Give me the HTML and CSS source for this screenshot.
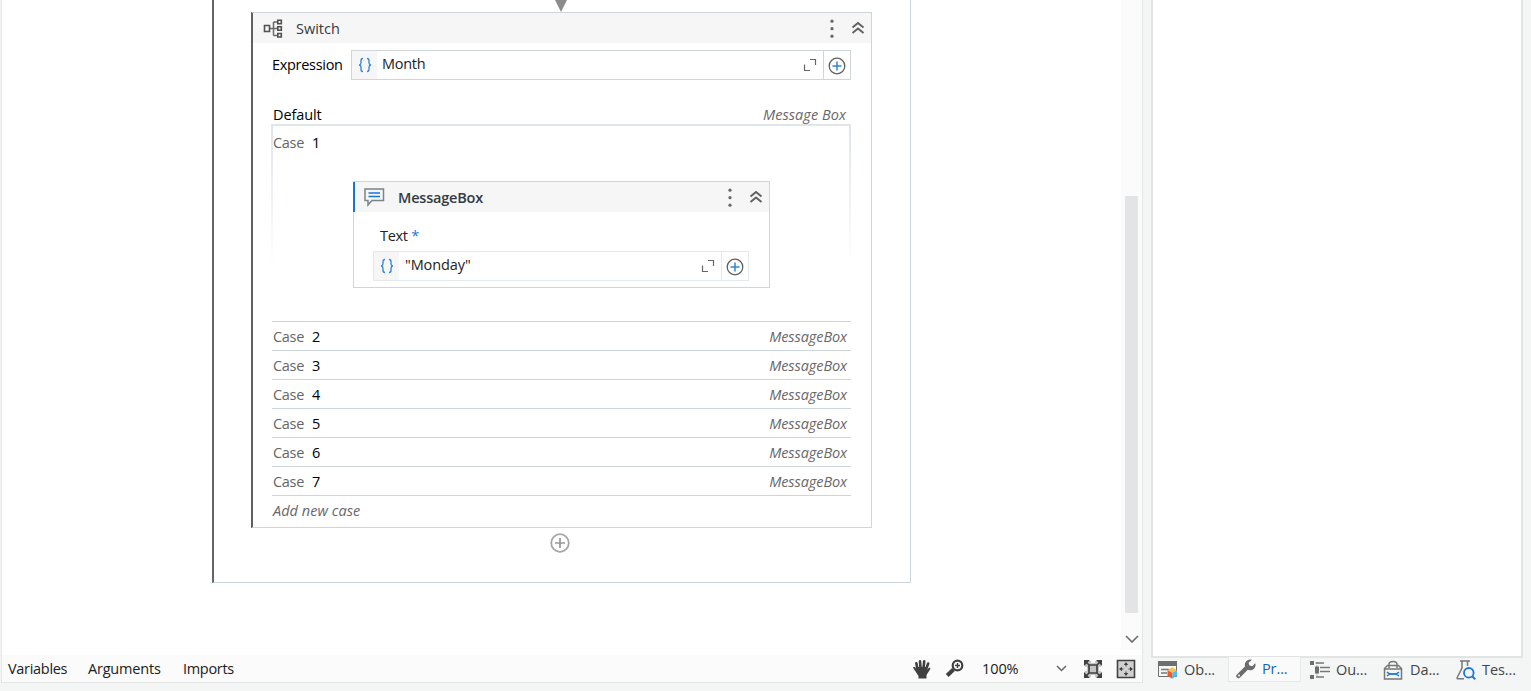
FILE: index.html
```html
<!DOCTYPE html>
<html lang="en">
<head>
<meta charset="utf-8">
<title>Workflow designer</title>
<link rel="stylesheet" href="styles.css">
</head>
<body>
<svg class="defs" width="0" height="0">
  <symbol id="dots" viewBox="0 0 4 20"><g fill="#666"><circle cx="2" cy="2.2" r="1.6"/><circle cx="2" cy="9.7" r="1.6"/><circle cx="2" cy="17.2" r="1.6"/></g></symbol>
  <symbol id="collapse" viewBox="0 0 14 14"><path d="M1.500 6.500 7 2l5.500 4.500M1.500 12 7 7.500l5.500 4.500" fill="none" stroke="#606060" stroke-width="1.900"/></symbol>
  <symbol id="expand" viewBox="0 0 14 14"><path d="M7 1.500h5.500V7M1.500 6.500V12.500H7" fill="none" stroke="#666" stroke-width="1.200"/></symbol>
  <symbol id="plus" viewBox="0 0 18 18"><circle cx="9" cy="9" r="7.800" fill="none" stroke="#606060" stroke-width="1.300"/><path d="M9 4.500v9M4.500 9h9" stroke="#2f86da" stroke-width="1.500"/></symbol>
  <symbol id="chevron" viewBox="0 0 14 8"><path d="M1 1l6 6 6-6" fill="none" stroke="#666" stroke-width="1.500"/></symbol>
  <symbol id="braces" viewBox="0 0 14 16"><path d="M5 1.500C3.300 1.500 3 2.200 3 3.500v2.300C3 7.200 2.500 7.700 1.200 8c1.300.3 1.800.8 1.800 2.200v2.300c0 1.300.3 2 2 2M9 1.500c1.700 0 2 .7 2 2v2.300c0 1.400.5 1.900 1.800 2.200-1.300.3-1.800.8-1.800 2.200v2.300c0 1.300-.3 2-2 2" fill="none" stroke="#2f82d5" stroke-width="1.300"/></symbol>
</svg>
<div class="app">
  <main class="designer">
    <div class="workspace">
      <div class="canvas">
        <section class="sequence">
          <svg class="arrow" width="12" height="12"><path d="M0 0h12L6 12z" fill="#8c8c8c"/></svg>
          <section class="switch">
            <header class="head">
              <svg class="switch-icon" width="20" height="20" viewBox="0 0 20 20" fill="none"><path d="M6.500 9.500H14M10.500 3v13.500M10.500 3H14M10.500 16.500H14" stroke="#6a6a6a" stroke-width="1.500"/><path d="M1.500 6.500h5v6h-5zM14.800 1.200h3.500v3.500h-3.500zM14.800 7.800h3.500v3.500h-3.500zM14.800 14.500h3.500V18h-3.500z" stroke="#505050" stroke-width="1.600"/></svg>
              <span class="title">Switch</span>
              <svg class="dots" width="4" height="20"><use href="#dots"/></svg>
              <svg class="collapse" width="14" height="14"><use href="#collapse"/></svg>
            </header>
            <div class="expression">
              <label class="expr-label">Expression</label>
              <div class="field">
                <span class="braces"><svg width="14" height="16"><use href="#braces"/></svg></span><span class="value">Month</span>
                <svg class="expand" width="14" height="14"><use href="#expand"/></svg>
                <span class="add"><svg width="18" height="18"><use href="#plus"/></svg></span>
              </div>
            </div>
            <div class="default"><span class="default-label">Default</span><em class="default-type">Message Box</em></div>
            <div class="case-open">
              <div class="case-label"><span>Case</span><b>1</b></div>
              <section class="message">
                <header class="head message-head">
                  <svg class="message-icon" width="21" height="19" viewBox="0 0 21 19" fill="none"><path d="M1 1h18.500v11.500H8L4 17v-4.500H1z" stroke="#7b848b" stroke-width="1.500"/><path d="M4.500 5h11.500M4.500 8.500h11.500" stroke="#1b76da" stroke-width="1.300"/></svg>
                  <span class="title">MessageBox</span>
                  <svg class="dots" width="4" height="20"><use href="#dots"/></svg>
                  <svg class="collapse" width="14" height="14"><use href="#collapse"/></svg>
                </header>
                <div class="text-label">Text <span class="star">*</span></div>
                <div class="field light">
                  <span class="braces"><svg width="14" height="16"><use href="#braces"/></svg></span><span class="value">"Monday"</span>
                  <svg class="expand" width="14" height="14"><use href="#expand"/></svg>
                  <span class="add"><svg width="18" height="18"><use href="#plus"/></svg></span>
                </div>
              </section>
            </div>
            <div class="cases">
              <div class="case"><span>Case</span><b>2</b><em>MessageBox</em></div>
              <div class="case"><span>Case</span><b>3</b><em>MessageBox</em></div>
              <div class="case"><span>Case</span><b>4</b><em>MessageBox</em></div>
              <div class="case"><span>Case</span><b>5</b><em>MessageBox</em></div>
              <div class="case"><span>Case</span><b>6</b><em>MessageBox</em></div>
              <div class="case"><span>Case</span><b>7</b><em>MessageBox</em></div>
              <div class="case"><em class="new-case">Add new case</em></div>
            </div>
          </section>
          <svg class="append" width="20" height="20" fill="none"><circle cx="10" cy="10" r="8.800" stroke="#a6a6a6" stroke-width="1.800"/><path d="M10 5v10M5 10h10" stroke="#999" stroke-width="1.700"/></svg>
        </section>
      </div>
      <div class="scrollbar"><div class="thumb"></div><svg class="scroll-down" width="14" height="8"><use href="#chevron"/></svg></div>
    </div>
    <footer class="status">
      <span class="variables">Variables</span><span class="arguments">Arguments</span><span class="imports">Imports</span>
      <svg class="hand" width="20" height="20" viewBox="0 0 20 20" fill="none"><path d="M5.500 10 4.300 4.200M8.500 9 8 2.300M11.500 9l.7-6.700M14 10.500l2.200-6" stroke="#404040" stroke-width="2.600" stroke-linecap="round"/><path d="M1 8.500c1-.8 2.300-.3 3 1l1 1L4.500 8h10l-.2 3.500 2.200-2.300c1-.8 2.200-.1 1.800.8L14.500 16v3.500h-8V17L3.200 12z" fill="#404040"/></svg>
      <svg class="lens" width="20" height="20" viewBox="0 0 20 20" fill="none"><circle cx="12.500" cy="6.500" r="4.800" stroke="#404040" stroke-width="2.200"/><path d="m8.500 10.500-6.300 6" stroke="#404040" stroke-width="4"/><path d="M12.500 4v5M10 6.500h5" stroke="#404040" stroke-width="1.400"/></svg>
      <span class="zoom">100%</span>
      <svg class="zoom-arrow" width="11" height="7" viewBox="0 0 11 7"><path d="m1 1 4.500 4.500L10 1" fill="none" stroke="#666" stroke-width="1.500"/></svg>
      <svg class="fit" width="20" height="20" viewBox="0 0 20 20"><path fill="#c4c4c4" d="M2 2h16v16H2z"/><path d="M6 6h8v8H6zM6 6 2 2M14 6l4-4M6 14l-4 4M14 14l4 4" fill="none" stroke="#404040" stroke-width="1.700"/><path d="M1 1h6L1 7zM19 1h-6l6 6zM1 19h6l-6-6zM19 19h-6l6-6z" fill="#404040"/><path d="M8 0h4v4H8zM8 16h4v4H8zM0 8h4v4H0zM16 8h4v4h-4z" fill="#fbfbfb"/></svg>
      <svg class="overview" width="20" height="20" viewBox="0 0 20 20"><path d="M1.500 1.500h17v17h-17z" fill="#d0d0d0" stroke="#404040" stroke-width="1.600"/><path d="M10 3l2.200 3H7.800zM10 17l2.200-3H7.800zM3 10l3-2.200v4.400zM17 10l-3-2.200v4.400z" fill="#404040"/><path d="M10 5v2.500M10 12.500V15M5 10h2.500M12.500 10H15" stroke="#404040"/></svg>
    </footer>
  </main>
  <aside class="side">
    <div class="properties"></div>
    <nav class="tabs">
      <div class="tab objects"><svg width="21" height="20" viewBox="0 0 21 20" fill="none"><path d="M1.500 2h18v14.500h-18z" stroke="#6d6e70"/><path fill="#6d6e70" d="M1 1h19v5H1z"/><path d="M4 9.500h8M4 13h6" stroke="#777" stroke-width="1.500"/><path d="m10.500 10.200 4.700-3 4.800 3-4.800 2.500z" fill="#f6bd55"/><path d="m10.500 10.200 4.700 2.500v6l-4.700-3z" fill="#fb5525"/><path d="m15.200 12.700 4.800-2.500v5.500l-4.800 3z" fill="#53bde7"/></svg><span>Ob...</span></div>
      <div class="tab active"><svg width="21" height="20" viewBox="0 0 21 20" fill="none"><path d="M3.500 17 12 8.500" stroke="#6b6b6b" stroke-width="4.500" stroke-linecap="round"/><path d="M17 .8a5.300 5.300 0 0 0-6.500 7.500l3 2.700a5.300 5.300 0 0 0 6.700-6.800l-3 3-2.800-.8-.8-2.600z" fill="#6b6b6b"/><circle cx="4" cy="16.500" r="1" fill="#fafafa"/></svg><span>Pr...</span></div>
      <div class="tab outline"><svg width="20" height="20" viewBox="0 0 20 20"><path d="M5 3h3M7 5v3M7 11v6" fill="none" stroke="#b8b8b8"/><path d="M0 1h4v4H0zM5 6.500h4v7H5zM0 15h4v4H0z" fill="#6d6e70"/><path d="M6 3h8M10 7.500h10M10 11.500h10M6 17h8" stroke="#777" stroke-width="1.400"/></svg><span>Ou...</span></div>
      <div class="tab data"><svg width="20" height="20" viewBox="0 0 20 20" fill="none"><path d="M1.500 19V8.500l3-3h11l3 3V19zM1.500 9h17M6 8V4.500c0-4 8-4 8 0V8" stroke="#777" stroke-width="1.500"/><path d="M6 14h8" stroke="#1b76da" stroke-width="1.800"/><path d="m4 12 2.500 2L4 16M16 12l-2.500 2 2.500 2" stroke="#1b76da" stroke-width="1.600"/></svg><span>Da...</span></div>
      <div class="tab tests"><svg width="20" height="20" viewBox="0 0 20 20" fill="none"><path d="M4 1h10M6 1v7L1.200 17.500c-.4.800 0 1.300 1 1.300H8M11.500 1v5" stroke="#777" stroke-width="1.500"/><circle cx="12.800" cy="12.800" r="4.800" stroke="#1b76da" stroke-width="1.800"/><path d="m16.200 16.200 3 3" stroke="#1b76da" stroke-width="2"/></svg><span>Tes...</span></div>
    </nav>
  </aside>
</div>
</body>
</html>
```
FILE: styles.css
```css
* { box-sizing: border-box; }
body { margin: 0; background: #f4f6f6; color: #222; font: 14.5px/20px "Open Sans", "Noto Sans", sans-serif; letter-spacing: -0.3px; overflow: hidden; }
svg { display: block; flex: none; }
.defs { position: absolute; }
.app { display: flex; height: 691px; padding-left: 1px; }
.designer { width: 1142px; height: 683px; flex: none; border: 1px solid #e4e6e6; border-top: 0; display: flex; flex-direction: column; background: #fff; }
.workspace { display: flex; height: 655px; }
.canvas { width: 1119px; padding-left: 210px; }
.sequence { width: 699px; height: 583px; border: 1px solid #cdd6da; border-top: 0; border-left: 2px solid #666; padding-left: 37px; }
.arrow { margin-left: 304px; height: 12px; }
.switch { width: 621px; height: 516px; border: 1px solid #cdd6da; border-left: 2px solid #606060; }
.head { height: 30px; background: #f6f6f6; display: flex; align-items: center; color: #333b43; }
.switch-icon { margin: 1px 13px 0 10px; }
.title { flex: 1; padding-top: 1px; }
.switch > .head .title { letter-spacing: 0; }
.dots { margin: 1px 17px 0 0; }
.collapse { margin-right: 6px; }
.expression { display: flex; margin-top: 7px; padding-left: 19px; height: 30px; align-items: center; color: #000; }
.expr-label { width: 79px; }
.field { width: 500px; height: 30px; border: 1px solid #cdd6da; display: flex; align-items: center; color: #222; }
.braces { width: 25px; align-self: stretch; background: #f6f6f6; display: flex; align-items: center; justify-content: center; }
.value { flex: 1; padding: 0 0 2px 5px; }
.expand { margin: -1px 6px 0 0; }
.add { width: 27px; align-self: stretch; border-left: 1px solid #cdd6da; display: flex; align-items: center; justify-content: center; padding-top: 1px; }
.default { display: flex; justify-content: space-between; height: 20px; margin-top: 25px; padding: 0 25px 0 20px; color: #000; }
.default-label { letter-spacing: -0.1px; }
em { color: #686868; font-style: italic; letter-spacing: -0.08px; }
.default-type { letter-spacing: 0.05px; }
.case-open { width: 580px; height: 197px; margin: -1px 0 0 18px; border-top: 2px solid #dfe5e8; background: linear-gradient(#dfe5e8, #fff) left top / 2px 142px no-repeat, linear-gradient(#dfe5e8, #fff) right top / 2px 142px no-repeat; }
.case-label { height: 20px; margin: 7px 0 28px 2px; display: flex; color: #666; }
.case-label span, .case span { width: 39px; }
b { font-weight: 400; color: #000; }
.message { width: 417px; height: 107px; border: 1px solid #cdd6da; margin-left: 82px; }
.message-head { margin: -1px 0 0 -1px; height: 31px; border-top: 1px solid #cdd6da; box-shadow: inset 2px 0 #1676d2; padding-left: 2px; font-weight: 600; letter-spacing: -0.2px; }
.message-icon { margin: 0 13px 0 9px; }
.text-label { margin: 14px 0 5px 26px; height: 20px; }
.star { color: #2479ce; }
.light { width: 376px; margin-left: 19px; border-color: #e3e9ec; }
.light .value { padding-left: 6px; letter-spacing: -0.1px; }
.light .add { border-color: #e3e9ec; }
.cases { width: 579px; margin-left: 19px; }
.case { height: 29px; border-top: 1px solid #cdd6da; display: flex; align-items: center; color: #666; padding: 2px 4px 0 1px; }
.case em { margin-left: auto; }
.case .new-case { margin-left: 0; letter-spacing: 0.05px; }
.append { margin: 5px 0 0 299px; }
.scrollbar { width: 21px; height: 650px; background: #fbfbfb; padding-top: 196px; }
.thumb { width: 13px; height: 417px; margin-left: 4px; background: #e2e4e5; }
.scroll-down { margin: 22px 0 0 4px; }
.status { height: 27px; background: #fbfbfb; display: flex; align-items: center; padding-left: 6px; color: #202020; }
.variables { width: 80px; }
.arguments { width: 95px; letter-spacing: -0.2px; }
.imports { width: 729px; }
.lens { margin-left: 13px; }
.zoom { width: 74px; margin-left: 17px; letter-spacing: -0.1px; }
.fit { margin-left: 16px; }
.overview { margin-left: 13px; }
.side { margin-left: 8px; width: 379px; flex: none; }
.properties { width: 372px; height: 658px; border: 2px solid #e2e4e4; border-top: 0; background: #fff; }
.tabs { display: flex; height: 25px; margin-top: -1px; color: #444; letter-spacing: -0.1px; }
.tab { display: flex; align-items: center; gap: 6px; height: 25px; flex: none; padding-left: 6px; }
.objects { width: 77px; }
.active { width: 73px; color: #1466b5; background: #fafafa; border: 1px solid #e7e9e9; border-top: 0; }
.outline { width: 74px; padding-left: 9px; }
.data { width: 75px; padding-left: 8px; gap: 7px; }
.tests { width: 75px; padding-left: 6px; }
```
